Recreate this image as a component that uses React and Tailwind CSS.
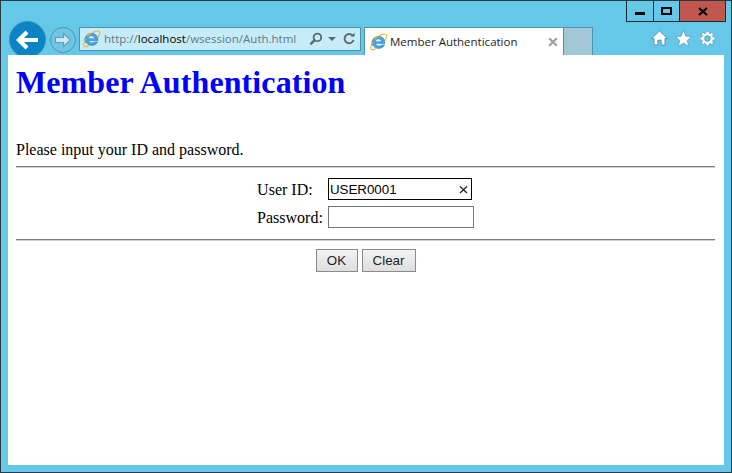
const IeLogo = () => (
    <svg width="18" height="18" viewBox="0 0 18 18" fill="none" className="shrink-0">
        <path d="M2.2 12.5A6.6 6.6 0 0 1 14.8 7.6L14.8 10.6H5.6C6 13.2 10 13.6 12 11.9H14.6C12.6 16.2 6.6 16.2 4 13.6" fill="#4aa3dc" stroke="#2b7fc0" strokeWidth="0.6" />
        <path d="M5.8 8.2C6.2 5.6 10.4 5.6 11 8.2Z" fill="#e8f6fc" />
        <path d="M4.5 6.2C7 3 14.5 -0.2 16.4 1.4C17.6 2.6 16.4 5 15 7" stroke="#f0b429" strokeWidth="1.1" strokeLinecap="round" />
        <path d="M2.8 9.2C0.6 12.6 0.2 15.8 1.6 16.6C2.8 17.2 4.4 16.6 6 15.6" stroke="#f0b429" strokeWidth="1.1" strokeLinecap="round" />
    </svg>
);

const WindowButtons = () => (
    <div className="absolute top-0 right-[5px] h-[21px] flex border border-t-0 border-[#1d2a30]">
        <div className="w-[27px] flex items-center justify-center border-r border-[#1d2a30]">
            <div className="w-[10px] h-[3px] bg-black mt-[5px]"></div>
        </div>
        <div className="w-[26px] flex items-center justify-center border-r border-[#1d2a30]">
            <div className="w-[11px] h-[8px] border-2 border-black"></div>
        </div>
        <div className="w-[45px] flex items-center justify-center bg-[#c0584f]">
            <svg width="10" height="9" viewBox="0 0 10 9">
                <path d="M1 1L9 8M9 1L1 8" stroke="#000" strokeWidth="2.2" />
            </svg>
        </div>
    </div>
);

const ToolIcons = () => (
    <div className="flex items-center gap-[7px] ml-[58px] -mt-[6px]">
        <svg width="17" height="16" viewBox="0 0 17 16">
            <path d="M8.5 1L16.5 8.6H14V15H10.2V10.2H6.8V15H3V8.6H0.5Z" fill="#fff" stroke="#4d8ea5" strokeWidth="0.9" />
        </svg>
        <svg width="17" height="17" viewBox="0 0 17 17">
            <path d="M8.5 0.6L10.8 6.2L16.6 6.6L12.2 10.4L13.6 16.2L8.5 13.1L3.4 16.2L4.8 10.4L0.4 6.6L6.2 6.2Z" fill="#fff" stroke="#4d8ea5" strokeWidth="0.6" />
        </svg>
        <svg width="17" height="17" viewBox="0 0 17 17" fill="none">
            <path d="M8.5 1V4M8.5 13V16M1 8.5H4M13 8.5H16M3.2 3.2L5.3 5.3M11.7 11.7L13.8 13.8M13.8 3.2L11.7 5.3M5.3 11.7L3.2 13.8" stroke="#4d8ea5" strokeWidth="3.6" />
            <path d="M8.5 1.4V4M8.5 13V15.6M1.4 8.5H4M13 8.5H15.6M3.5 3.5L5.3 5.3M11.7 11.7L13.5 13.5M13.5 3.5L11.7 5.3M5.3 11.7L3.5 13.5" stroke="#fff" strokeWidth="2.6" />
            <circle cx="8.5" cy="8.5" r="4.2" stroke="#fff" strokeWidth="2.4" />
            <circle cx="8.5" cy="8.5" r="2.8" stroke="#4d8ea5" strokeWidth="0.7" />
        </svg>
    </div>
);

const Toolbar = () => (
    <div className="h-[54px] flex pl-[8px] pt-[26px] relative font-['Open_Sans',sans-serif]">
        {/* Back / forward */}
        <div className="w-[37px] h-[37px] -mt-[6px] rounded-full bg-[#0a84c4] border border-[#3f8fb0] flex items-center justify-center shrink-0">
            <svg width="24" height="22" viewBox="0 0 24 22" fill="none">
                <path d="M11 3L3 11L11 19M3.5 11H22" stroke="#fff" strokeWidth="4.2" />
            </svg>
        </div>
        <div className="w-[26px] h-[26px] ml-[4px] rounded-full border border-[#4d93aa] bg-[#70c6e2] flex items-center justify-center shrink-0">
            <svg width="18" height="16" viewBox="0 0 18 16" fill="none">
                <path d="M9.5 1.5L16.5 8L9.5 14.5V10.5H1.5V5.5H9.5Z" fill="#c5ecf8" stroke="#5f9db3" strokeWidth="1.1" />
            </svg>
        </div>

        {/* Address bar */}
        <div className="w-[282px] h-[24px] ml-[3px] flex items-center border border-[#4d93aa] bg-[#c5ecf8] pl-[3px] shrink-0">
            <IeLogo />
            <span className="ml-[3px] text-[11.5px] whitespace-nowrap text-[#5d7a86]">
                http://<span className="text-black">localhost</span>/wsession/Auth.html
            </span>
            <svg width="14" height="14" viewBox="0 0 14 14" fill="none" className="ml-[13px] shrink-0">
                <circle cx="8.4" cy="5.4" r="3.8" stroke="#5b6a70" strokeWidth="1.8" />
                <path d="M5.6 8.2L1.4 12.4" stroke="#5b6a70" strokeWidth="2.4" />
            </svg>
            <div className="ml-[5px] w-0 h-0 border-x-[4px] border-x-transparent border-t-[4px] border-t-[#5b6a70]"></div>
            <svg width="14" height="14" viewBox="0 0 14 14" fill="none" className="ml-[6px] shrink-0">
                <path d="M11 4A4.6 4.6 0 1 0 11.6 8" stroke="#5b6a70" strokeWidth="1.9" />
                <path d="M8.6 4.6H12.6V0.8Z" fill="#5b6a70" />
            </svg>
        </div>

        {/* Tabs */}
        <div className="w-[200px] h-[28px] ml-[3px] flex items-center bg-white border border-b-0 border-[#4d93aa] pl-[5px] shrink-0">
            <IeLogo />
            <span className="ml-[2px] text-[11.5px] whitespace-nowrap text-[#1e1e1e]">Member Authentication</span>
            <svg width="10" height="10" viewBox="0 0 10 10" className="ml-auto mr-[5px] shrink-0">
                <path d="M1.2 1.2L8.8 8.8M8.8 1.2L1.2 8.8" stroke="#9aa3a6" strokeWidth="2.2" />
            </svg>
        </div>
        <div className="w-[29px] h-[28px] bg-[#a2c8d7] border border-l-0 border-b-0 border-[#4d93aa] shrink-0"></div>

        <ToolIcons />
        <WindowButtons />
    </div>
);

const Page = () => (
    <div className="relative flex-1 mx-[7px] bg-white pl-[8px] pr-[9px] font-['Liberation_Serif',serif] text-[16px] text-black">
        <h1 className="text-[32px] leading-[37px] font-bold text-[#0000ff] pt-[9px] tracking-[0.1px]">Member Authentication</h1>
        <p className="mt-[40px] leading-[18px]">Please input your ID and password.</p>
        <hr className="mt-[7px] border-t-0 h-[2px] bg-[#808080] border-b border-b-[#d0d0d0]" />
        <div className="flex justify-center mt-[9px]">
            <div className="grid grid-cols-[auto_auto] gap-x-[5px] gap-y-[4px] items-center">
                <span className="leading-[22px] pt-[2px]">User ID:</span>
                <div className="w-[144px] h-[22px] flex items-center border border-black pl-[1px] pr-[3px] font-['Liberation_Sans',sans-serif] text-[13.33px]">
                    <span className="pt-px">USER0001</span>
                    <svg width="9" height="9" viewBox="0 0 9 9" className="ml-auto">
                        <path d="M1 1.5L8 8M8 1.5L1 8" stroke="#222" strokeWidth="1.3" />
                    </svg>
                </div>
                <span className="leading-[22px] pt-[2px]">Password:</span>
                <div className="w-[146px] h-[22px] border border-[#767676]"></div>
            </div>
        </div>
        <hr className="mt-[10px] border-t-0 h-[2px] bg-[#808080] border-b border-b-[#d0d0d0]" />
        <div className="flex justify-center gap-[4px] mt-[8px] font-['Liberation_Sans',sans-serif] text-[13.33px]">
            <button className="w-[42px] h-[23px] border border-[#8a8a8a] bg-gradient-to-b from-[#f2f2f2] to-[#dedede] text-[#222]">OK</button>
            <button className="w-[54px] h-[23px] border border-[#8a8a8a] bg-gradient-to-b from-[#f2f2f2] to-[#dedede] text-[#222]">Clear</button>
        </div>
    </div>
);

export default function App() {
    return (
        <div className="w-[732px] h-[473px] flex flex-col overflow-hidden bg-[#65c8e9] border border-[#2b3a40] pb-[7px]">
            <Toolbar />
            <Page />
        </div>
    );
}
